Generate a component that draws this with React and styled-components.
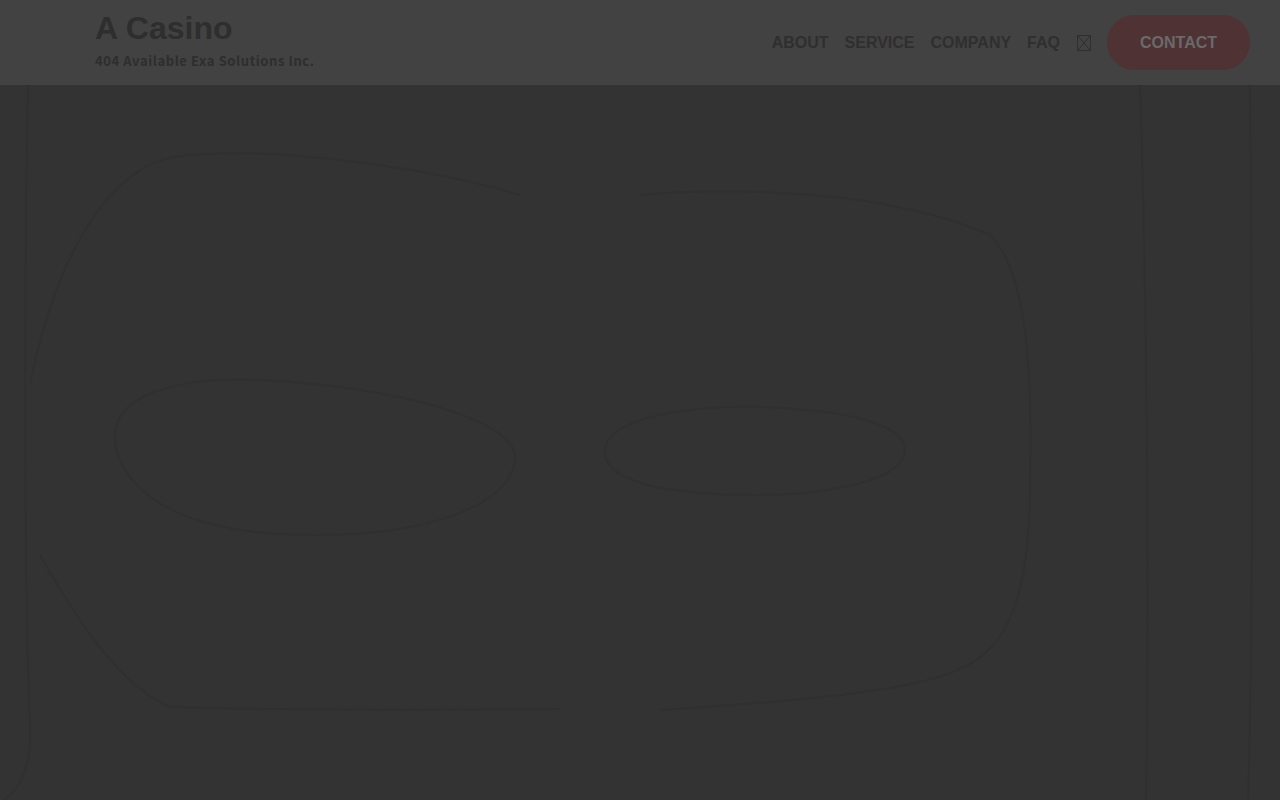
import React from "react";
import styled, { createGlobalStyle } from "styled-components";

const navItems = ["ABOUT", "SERVICE", "COMPANY", "FAQ"];

export default function App() {
  return (
    <>
      <GlobalStyle />
      <Page>
        <Header>
          <Brand>
            <Title>A Casino</Title>
            <Sub>404 Available Exa Solutions Inc.</Sub>
          </Brand>
          <Nav>
            {navItems.map((item) => (
              <NavLink key={item}>{item}</NavLink>
            ))}
            <Tofu width="14" height="16" viewBox="0 0 14 16">
              <rect x="0.5" y="0.5" width="13" height="15" fill="none" stroke="#2f2f2f" strokeWidth="1" />
              <path d="M1 1 L13 15 M13 1 L1 15" stroke="#2f2f2f" strokeWidth="1" />
            </Tofu>
            <ContactBtn>CONTACT</ContactBtn>
          </Nav>
        </Header>
        <Hero>
          <Backdrop viewBox="0 0 1280 715" preserveAspectRatio="none">
            <g fill="none" stroke="#303030" strokeWidth="2">
              <path d="M28 0 C24 200 24 500 30 640 C32 680 20 705 4 715" />
              <path d="M1250 0 C1252 250 1254 520 1248 715" />
              <path d="M1140 0 C1146 180 1150 500 1146 715" />
              <path d="M520 110 C420 80 260 60 175 72 C120 80 60 150 30 300" />
              <path d="M640 110 C760 100 900 110 990 150 C1030 190 1032 300 1030 400 C1030 470 1020 530 993 560 C960 600 880 610 660 625" />
              <path d="M120 375 C90 300 200 285 320 300 C420 310 520 340 515 375 C510 420 430 450 315 450 C200 450 140 420 120 375 Z" />
              <path d="M605 370 C600 330 700 320 760 322 C850 325 905 340 905 365 C905 395 830 410 755 410 C680 410 610 400 605 370 Z" />
              <path d="M40 470 C80 540 120 600 170 622 C260 625 420 625 560 624" />
            </g>
          </Backdrop>
        </Hero>
      </Page>
    </>
  );
}

const GlobalStyle = createGlobalStyle`
  html, body {
    margin: 0;
    padding: 0;
    background: #333333;
  }
  * {
    box-sizing: border-box;
  }
`;

const Page = styled.div`
  display: flex;
  flex-direction: column;
  width: 100%;
  height: 800px;
  overflow: hidden;
`;

const Header = styled.header`
  display: flex;
  align-items: center;
  justify-content: space-between;
  height: 85px;
  padding: 0 30px 0 95px;
  background: #424242;
  flex-shrink: 0;
`;

const Brand = styled.div`
  display: flex;
  flex-direction: column;
  margin-top: -6px;
`;

const Title = styled.h1`
  margin: 0;
  font-family: "Liberation Sans", Arial, sans-serif;
  font-weight: 700;
  font-size: 32px;
  line-height: 34px;
  color: #2e2e2e;
`;

const Sub = styled.p`
  margin: 8px 0 0;
  font-family: "Noto Sans CJK JP", "Noto Sans", sans-serif;
  font-weight: 700;
  font-size: 13px;
  line-height: 16px;
  letter-spacing: 0.6px;
  color: #2e2e2e;
`;

const Nav = styled.nav`
  display: flex;
  align-items: center;
  gap: 16px;
`;

const NavLink = styled.a`
  font-family: "Liberation Sans", Arial, sans-serif;
  font-weight: 700;
  font-size: 16px;
  color: #2f2f2f;
  cursor: pointer;
`;

const Tofu = styled.svg`
  display: block;
  margin-left: 1px;
`;

const ContactBtn = styled.button`
  all: unset;
  display: flex;
  align-items: center;
  justify-content: center;
  width: 143px;
  height: 55px;
  border-radius: 28px;
  background: #4e3234;
  font-family: "Liberation Sans", Arial, sans-serif;
  font-weight: 700;
  font-size: 16px;
  color: #6a6a6a;
  cursor: pointer;
`;

const Hero = styled.main`
  flex: 1;
  background: #333333;
`;

const Backdrop = styled.svg`
  display: block;
  width: 100%;
  height: 100%;
`;
